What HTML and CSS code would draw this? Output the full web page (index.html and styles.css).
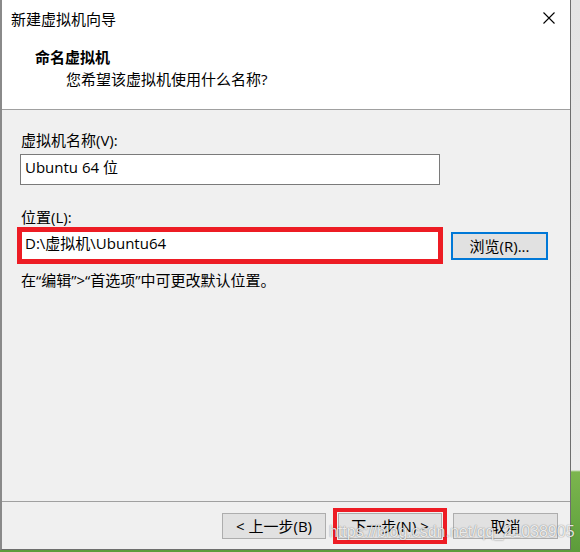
FILE: index.html
```html
<!DOCTYPE html>
<html lang="zh-CN">
<head>
<meta charset="utf-8">
<title>新建虚拟机向导</title>
<link rel="stylesheet" href="styles.css">
</head>
<body>
<div class="window">
  <div class="header">
    <div class="titlebar">
      <span class="title">新建虚拟机向导</span>
      <span class="close">
        <svg width="12" height="12" viewBox="0 0 12 12"><path d="M0.5 0.5 L11.5 11.5 M11.5 0.5 L0.5 11.5" stroke="#000" stroke-width="1.1" fill="none"/></svg>
      </span>
    </div>
    <div class="heading">命名虚拟机</div>
    <div class="subheading">您希望该虚拟机使用什么名称?</div>
  </div>
  <div class="content">
    <div class="label first">虚拟机名称(V):</div>
    <div class="input">Ubuntu 64 位</div>
    <div class="label second">位置(L):</div>
    <div class="row">
      <div class="input marked">D:\虚拟机\Ubuntu64</div>
      <div class="btn focus">浏览(R)...</div>
    </div>
    <div class="hint">在“编辑”&gt;“首选项”中可更改默认位置。</div>
  </div>
  <div class="footer">
    <div class="btn fbtn">&lt; 上一步(B)</div>
    <div class="btn fbtn next marked-btn">下一步(N) &gt;</div>
    <div class="btn fbtn cancel">取消</div>
  </div>
</div>
<div class="watermark">https://blog.csdn.net/qq_21038905</div>
</body>
</html>
```

FILE: styles.css
```css
html, body {
  margin: 0;
  padding: 0;
}
body {
  width: 580px;
  height: 552px;
  overflow: hidden;
  position: relative;
  background: linear-gradient(to bottom, #e4e4e4 0, #ececec 470px, #7cb54e 472px, #69a843 520px, #5c9b3a 100%);
  font-family: "Open Sans", "Noto Sans CJK SC", sans-serif;
  font-size: 15px;
  color: #000;
}
.window {
  width: 568px;
  height: 549px;
  border-left: 2px solid #8a8a8a;
  border-right: 1px solid #6e6e6e;
  border-bottom: 1px solid #6e6e6e;
  background: #f0f0f0;
  display: flex;
  flex-direction: column;
}
.header {
  height: 109px;
  background: #fff;
  border-bottom: 1px solid #a0a0a0;
}
.titlebar {
  height: 38px;
  display: flex;
  align-items: center;
  padding-left: 9px;
}
.title {
  line-height: 20px;
}
.close {
  margin-left: auto;
  width: 42px;
  height: 38px;
  display: flex;
  align-items: center;
  justify-content: center;
  padding-bottom: 2px;
  box-sizing: border-box;
}
.close svg {
  display: block;
}
.heading {
  margin-top: 9px;
  padding-left: 33px;
  font-weight: bold;
  line-height: 20px;
}
.subheading {
  margin-top: 2px;
  padding-left: 64px;
  line-height: 20px;
}
.content {
  height: 391px;
  padding-left: 18px;
  box-sizing: border-box;
}
.label {
  line-height: 20px;
  padding-left: 1px;
}
.label.first {
  padding-top: 20px;
}
.label.second {
  margin-top: 22px;
}
.input {
  width: 420px;
  height: 31px;
  box-sizing: border-box;
  border: 1px solid #7a7a7a;
  background: #fff;
  padding: 1px 0 0 4px;
  line-height: 22px;
  margin-top: 4px;
  white-space: nowrap;
}
.row {
  display: flex;
  align-items: center;
  margin-top: 3px;
}
.row .input {
  margin-top: 0;
}
.marked {
  outline: 5px solid #ed1c24;
  outline-offset: -2px;
}
.btn {
  box-sizing: border-box;
  background: #e1e1e1;
  border: 1px solid #adadad;
  display: flex;
  align-items: center;
  justify-content: center;
  white-space: nowrap;
  line-height: 20px;
}
.btn.focus {
  width: 97px;
  height: 28px;
  margin-left: 11px;
  border: 2px solid #0078d7;
}
.hint {
  margin-top: 9px;
  line-height: 20px;
  padding-left: 1px;
}
.footer {
  flex: 1;
  border-top: 1px solid #a0a0a0;
  display: flex;
  justify-content: flex-end;
  align-items: flex-start;
  padding: 11px 12px 0 0;
}
.fbtn {
  width: 104px;
  height: 26px;
}
.next {
  margin-left: 12px;
}
.cancel {
  width: 105px;
  margin-left: 11px;
}
.marked-btn {
  outline: 4px solid #ed1c24;
  outline-offset: 1px;
}
.watermark {
  position: absolute;
  left: 329px;
  top: 522px;
  font-family: "Liberation Sans", sans-serif;
  font-size: 16px;
  line-height: 20px;
  color: rgba(255, 255, 255, 0.85);
  text-shadow: 0 0 1px rgba(0, 0, 0, 0.45), 0 0 2px rgba(0, 0, 0, 0.15);
  white-space: nowrap;
}
```
